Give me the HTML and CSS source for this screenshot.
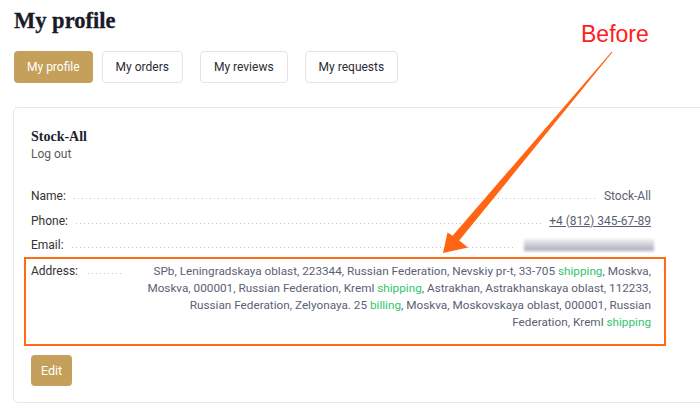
FILE: index.html
```html
<!DOCTYPE html>
<html lang="en">
<head>
<meta charset="utf-8">
<title>My profile</title>
<link rel="stylesheet" href="styles.css">
</head>
<body>
<div class="page">
  <h1 class="title">My profile</h1>
  <nav class="tabs">
    <a class="tab active">My profile</a>
    <a class="tab">My orders</a>
    <a class="tab">My reviews</a>
    <a class="tab">My requests</a>
  </nav>
  <section class="card">
    <div class="user">Stock-All</div>
    <a class="logout">Log out</a>
    <div class="rows">
      <div class="row">
        <span class="label">Name:</span><span class="leader"></span><span class="value">Stock-All</span>
      </div>
      <div class="row">
        <span class="label">Phone:</span><span class="leader"></span><a class="value link">+4 (812) 345-67-89</a>
      </div>
      <div class="row">
        <span class="label">Email:</span><span class="leader"></span><span class="value blurred"></span>
      </div>
      <div class="row address">
        <span class="label">Address:</span><span class="leader"></span><span class="value addr">SPb, Leningradskaya oblast, 223344, Russian Federation, Nevskiy pr-t, 33-705 <span class="tag">shipping</span>, Moskva, Moskva, 000001, Russian Federation, Kreml <span class="tag">shipping</span>, Astrakhan, Astrakhanskaya oblast, 112233, Russian Federation, Zelyonaya. 25 <span class="tag">billing</span>, Moskva, Moskovskaya oblast, 000001, Russian Federation, Kreml <span class="tag">shipping</span></span>
      </div>
    </div>
    <button class="edit">Edit</button>
  </section>
</div>
<div class="note">Before</div>
<svg class="arrow" width="700" height="404" viewBox="0 0 700 404">
  <polygon fill="#ff6512" points="612.4,52.3 611.6,51.7 452.6,235.8 447.5,232.5 443,253 468,247.5 459.2,240.6"/>
</svg>
</body>
</html>
```

FILE: styles.css
```css
html {
  overflow: hidden;
}
body {
  margin: 0;
  width: 700px;
  height: 404px;
  background: #ffffff;
  font-family: Roboto, "Liberation Sans", sans-serif;
  color: #333333;
  position: relative;
}
.page {
  padding: 8px 0 0 13px;
}
.title {
  margin: 0 0 17px 1px;
  font-family: "Liberation Serif", "DejaVu Serif", serif;
  font-weight: bold;
  font-size: 22.5px;
  line-height: 26px;
  color: #1a1a28;
  -webkit-text-stroke: 0.3px #1a1a28;
}
.tabs {
  display: flex;
  margin-left: 1px;
  margin-bottom: 24px;
}
.tab {
  display: block;
  height: 30px;
  line-height: 30px;
  padding: 0 13px;
  border: 1px solid #e4e4e4;
  border-radius: 4px;
  font-size: 12px;
  color: #2b2b33;
  margin-right: 17px;
  background: #ffffff;
}
.tab.active {
  height: 32px;
  line-height: 32px;
  border: none;
  background: #c4a05a;
  color: #ffffff;
  margin-right: 9px;
}
.card {
  width: 620px;
  padding: 20px 80px 16px 17px;
  border: 1px solid #e9e9e9;
  border-radius: 5px;
}
.user {
  font-family: "Liberation Serif", "DejaVu Serif", serif;
  font-weight: bold;
  font-size: 14px;
  line-height: 18px;
  color: #222230;
}
.logout {
  display: block;
  font-size: 12px;
  line-height: 17px;
  color: #5a5a5a;
}
.rows {
  margin-top: 21px;
}
.row {
  display: flex;
  font-size: 12px;
  line-height: 24px;
  height: 24.5px;
}
.label {
  flex: 0 0 auto;
  color: #333333;
}
.leader {
  flex: 1 1 auto;
  height: 15px;
  margin: 0 8px;
  background-image: linear-gradient(to right, #c4c4c4 1px, transparent 1px);
  background-size: 4px 1px;
  background-repeat: repeat-x;
  background-position: left bottom;
}
.value {
  flex: 0 0 auto;
  color: #5c5f73;
}
.link {
  text-decoration: underline;
}
.blurred {
  width: 130px;
  height: 12px;
  margin-top: 6px;
  margin-right: -3px;
  background: linear-gradient(#f0f0f2, #a7a9b6);
  filter: blur(1.6px);
}
.row.address {
  position: relative;
  height: auto;
  line-height: 17px;
  margin-top: 5px;
}
.row.address::before {
  content: "";
  position: absolute;
  left: -7px;
  right: -15px;
  top: -6px;
  bottom: -15px;
  border: 2px solid #ff6a13;
}
.row.address .leader {
  height: 11px;
  margin: 0 8px 0 10px;
}
.addr {
  width: 520px;
  font-size: 11.75px;
  text-align: right;
}
.tag {
  color: #34c46c;
}
.edit {
  display: block;
  margin-top: 24px;
  height: 31px;
  padding: 0 10px;
  border: none;
  border-radius: 4px;
  background: #c4a05a;
  color: #ffffff;
  font-family: Roboto, "Liberation Sans", sans-serif;
  font-size: 12.5px;
}
.note {
  position: absolute;
  left: 581px;
  top: 23px;
  font-family: "Liberation Sans", Arial, sans-serif;
  font-size: 23px;
  line-height: 23px;
  color: #ff1c1c;
}
.arrow {
  position: absolute;
  left: 0;
  top: 0;
  pointer-events: none;
}
```
